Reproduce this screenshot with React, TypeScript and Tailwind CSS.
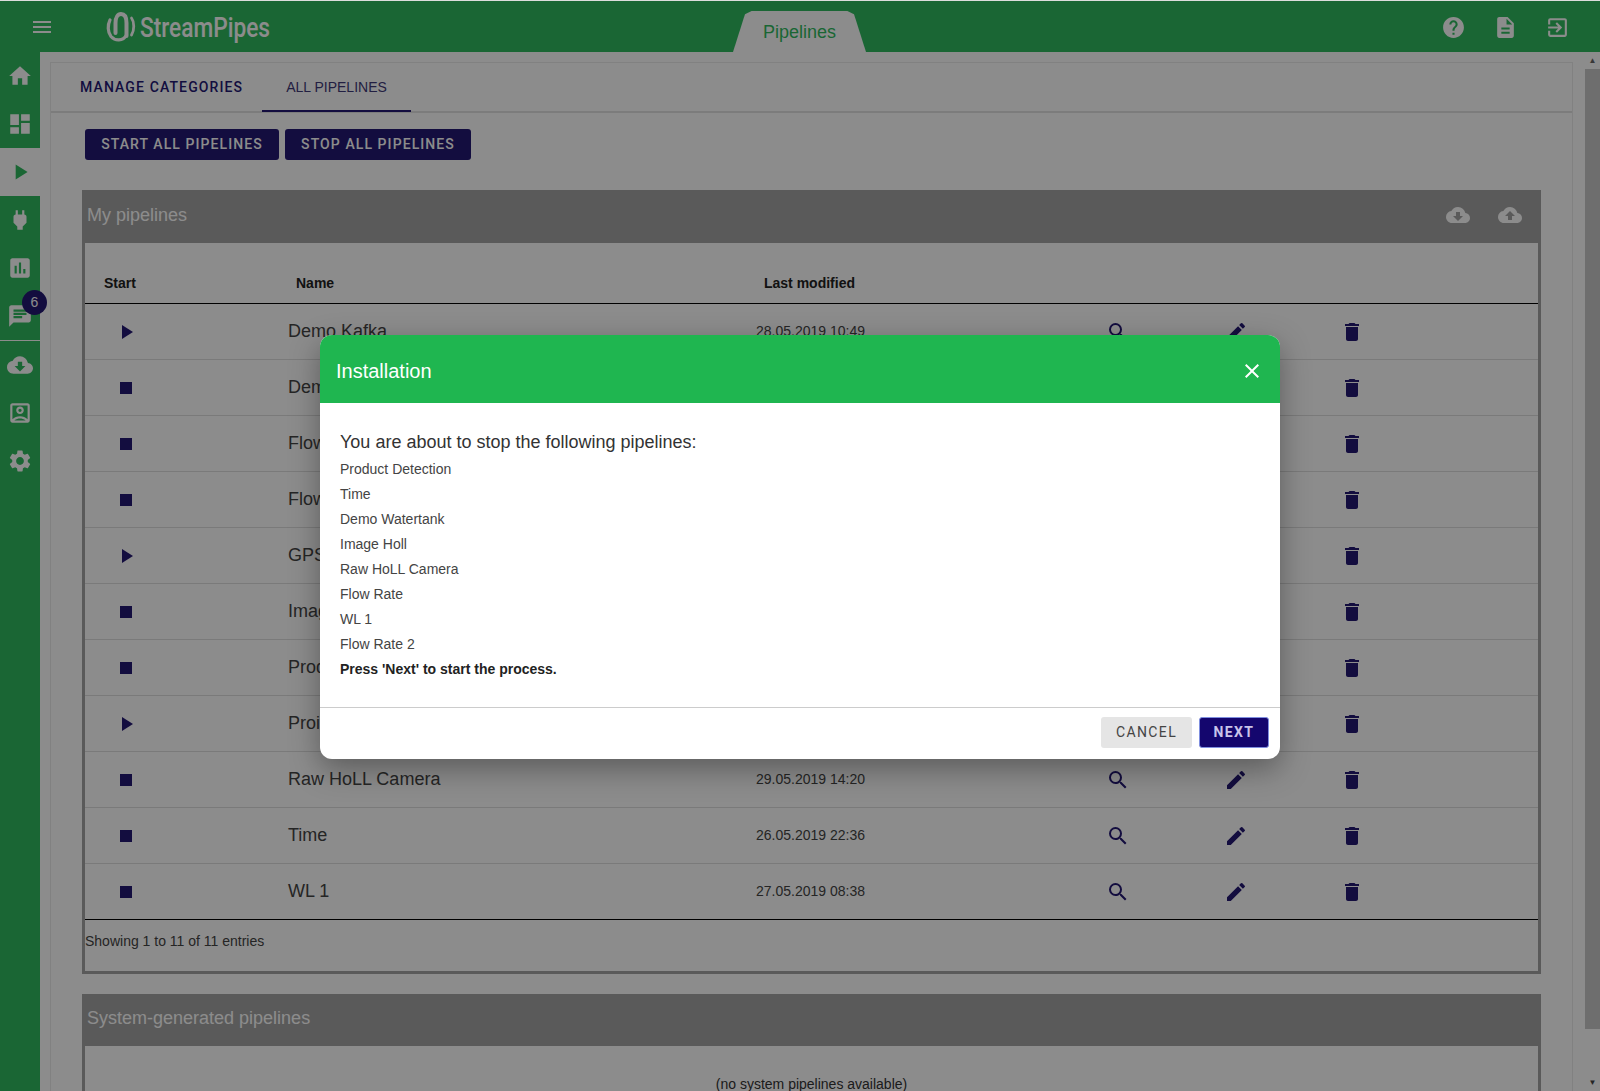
import {
  MdClose,
  MdChat,
  MdCloudDownload,
  MdCloudUpload,
  MdDashboard,
  MdDelete,
  MdDescription,
  MdEdit,
  MdExitToApp,
  MdHelp,
  MdHome,
  MdInsertChart,
  MdMenu,
  MdOutlineAccountBox,
  MdPlayArrow,
  MdPower,
  MdSearch,
  MdSettings,
  MdStop,
} from 'react-icons/md';

const rows = [
  { name: 'Demo Kafka', date: '28.05.2019 10:49', running: false },
  { name: 'Demo Watertank', date: '28.05.2019 11:02', running: true },
  { name: 'Flow Rate', date: '27.05.2019 08:34', running: true },
  { name: 'Flow Rate 2', date: '27.05.2019 08:36', running: true },
  { name: 'GPS Tracking', date: '26.05.2019 17:12', running: false },
  { name: 'Image Holl', date: '29.05.2019 14:18', running: true },
  { name: 'Product Detection', date: '29.05.2019 14:26', running: true },
  { name: 'Proite Demo', date: '26.05.2019 22:30', running: false },
  { name: 'Raw HoLL Camera', date: '29.05.2019 14:20', running: true },
  { name: 'Time', date: '26.05.2019 22:36', running: true },
  { name: 'WL 1', date: '27.05.2019 08:38', running: true },
];

const stopping = [
  'Product Detection',
  'Time',
  'Demo Watertank',
  'Image Holl',
  'Raw HoLL Camera',
  'Flow Rate',
  'WL 1',
  'Flow Rate 2',
];

const SideItem = ({ icon, active }: { icon: React.ReactNode; active?: boolean }) => (
  <div className={`flex h-12 items-center justify-center text-[26px] ${active ? 'bg-white text-[#31bb60]' : 'text-white'}`}>
    {icon}
  </div>
);

const Logo = () => (
  <svg width="30" height="30" viewBox="0 0 30 30" fill="none" stroke="white" strokeWidth="2.8" strokeLinecap="round">
    <path d="M4 8 C1.5 13 1.5 20 5 24.5 C9 29 17 29.5 20.5 23" strokeWidth="3.2" />
    <path d="M9.5 21 V11 C9.5 5 12 2 15 2 C18.5 2 20.5 5 20.5 11 V24" strokeWidth="4" />
    <path d="M25.5 6 C28.5 10 28.5 18 25.5 23" />
  </svg>
);

const App = () => {
  return (
    <div className="relative flex h-screen flex-col overflow-hidden border-t border-[#dddddd] bg-white font-['Liberation_Sans',sans-serif]">
      <header className="flex h-[51px] shrink-0 items-center bg-[#31bb60] text-white">
        <MdMenu className="ml-[30px] text-[24px]" />
        <div className="ml-[52px] flex items-center gap-[4px] pt-[1px]">
          <Logo />
          <span className="w-[130px] origin-left scale-x-[0.84] whitespace-nowrap pt-[2px] font-['Roboto',sans-serif] text-[27px] font-medium leading-none">StreamPipes</span>
        </div>
        <div className="ml-[463px] flex h-[41px] w-[133px] items-center justify-center self-end bg-white pt-[2px] text-[18px] text-[#31bb60] [clip-path:polygon(0_100%,9%_8%,14%_0,86%_0,91%_8%,100%_100%)]">
          Pipelines
        </div>
        <div className="ml-auto mr-[30px] flex gap-[27px] pt-[2px] text-[25px]">
          <MdHelp />
          <MdDescription />
          <MdExitToApp />
        </div>
      </header>

      <div className="flex min-h-0 flex-1">
        <aside className="w-10 shrink-0 bg-[#31bb60]">
          <SideItem icon={<MdHome />} />
          <SideItem icon={<MdDashboard />} />
          <SideItem active icon={<MdPlayArrow />} />
          <SideItem icon={<MdPower />} />
          <SideItem icon={<MdInsertChart />} />
          <div className="relative">
            <SideItem icon={<MdChat />} />
            <span className="absolute left-[22px] top-[-2px] flex h-[25px] w-[25px] items-center justify-center rounded-full bg-[#241874] text-[14px] text-white">
              6
            </span>
          </div>
          <div className="h-px bg-white" />
          <SideItem icon={<MdCloudDownload />} />
          <SideItem icon={<MdOutlineAccountBox />} />
          <SideItem icon={<MdSettings />} />
        </aside>

        <main className="min-w-0 flex-1 overflow-hidden pl-[10px] pr-[10px] pt-[10px]">
          <div className="min-h-[1200px] border border-[#ececec]">
            <div className="flex h-[50px] border-b-2 border-[#e2e2e2] text-[14px]">
              <div className="flex w-[211px] items-center pl-[29px] font-['Roboto',sans-serif] font-medium tracking-[0.08em] text-[#241874]">MANAGE CATEGORIES</div>
              <div className="-mb-[1px] flex w-[149px] items-center justify-center border-b-2 border-[#241874] pt-[1px] text-[#3f3a78]">ALL PIPELINES</div>
            </div>

            <div className="ml-[34px] mt-[16px] flex gap-[6px] font-['Roboto',sans-serif]">
              <button className="h-[31px] w-[194px] rounded-[3px] bg-[#241874] pb-[1px] text-[14px] font-medium tracking-[0.077em] text-white">START ALL PIPELINES</button>
              <button className="h-[31px] w-[186px] rounded-[3px] bg-[#241874] pb-[1px] text-[14px] font-medium tracking-[0.077em] text-white">STOP ALL PIPELINES</button>
            </div>

            <section className="ml-[31px] mt-[30px] w-[1459px] border-x-[3px] border-b-[3px] border-[#a5a5a5]">
              <div className="-mx-[3px] flex h-[53px] items-center bg-[#a5a5a5] pb-[3px] pl-[5px] text-[18px] text-white">
                <span>My pipelines</span>
                <div className="ml-auto mr-[19px] flex gap-[28px] text-[24px]">
                  <MdCloudDownload />
                  <MdCloudUpload />
                </div>
              </div>
              <div className="flex h-[61px] items-end border-b border-black pb-[9px] text-[14px] font-bold text-[#222222]">
                <div className="w-[211px] pl-[19px]">Start</div>
                <div className="w-[468px]">Name</div>
                <div>Last modified</div>
              </div>
              {rows.map((row, i) => (
                <div
                  key={row.name}
                  className={`flex h-[56px] items-center border-b text-[#241874] ${i === rows.length - 1 ? 'border-black' : 'border-[#dedede]'}`}
                >
                  <div className="w-[203px] pl-[29px]">
                    {row.running ? <MdStop className="text-[24px]" /> : <MdPlayArrow className="text-[24px]" />}
                  </div>
                  <div className="w-[468px] text-[18px] text-[#444444]">{row.name}</div>
                  <div className="w-[350px] text-[14px] text-[#444444]">{row.date}</div>
                  <div className="flex">
                    <MdSearch className="mr-[94px] text-[24px]" />
                    <MdEdit className="mr-[92px] text-[24px]" />
                    <MdDelete className="text-[24px]" />
                  </div>
                </div>
              ))}
              <div className="h-[51px] pt-[11px] text-[14px] text-[#444444]">Showing 1 to 11 of 11 entries</div>
            </section>

            <section className="ml-[31px] mt-[20px] w-[1459px] border-x-[3px] border-[#a5a5a5]">
              <div className="-mx-[3px] flex h-[52px] items-center bg-[#a5a5a5] pb-[4px] pl-[5px] text-[18px] text-white">System-generated pipelines</div>
              <p className="pt-[28px] text-center text-[14px] text-[#333333]">(no system pipelines available)</p>
            </section>
          </div>
        </main>

        <div className="flex w-[17px] shrink-0 flex-col items-end">
          <div className="flex h-[17px] w-[15px] items-center justify-center text-[8px] text-[#666666]">▲</div>
          <div className="h-[960px] w-[15px] bg-[#c8c8c8]" />
          <div className="mt-auto flex h-[17px] w-[15px] items-center justify-center text-[8px] text-[#444444]">▼</div>
        </div>
      </div>

      <div className="absolute inset-0 flex items-start justify-center bg-black/45 pt-[334px]">
        <div className="w-[960px] overflow-hidden rounded-[12px] bg-white shadow-[0_10px_30px_rgba(0,0,0,0.35)]">
          <div className="flex h-[68px] items-center justify-between bg-[#1fb650] pl-4 pr-[16px] pt-[3px] text-white">
            <h2 className="text-[20px]">Installation</h2>
            <MdClose className="text-[24px]" />
          </div>
          <div className="h-[304px] px-5 pt-[27px] text-[14px] leading-[25px] text-[#444444]">
            <p className="mb-[3px] text-[18px] leading-[24px] text-[#333333]">You are about to stop the following pipelines:</p>
            {stopping.map((name) => (
              <p key={name}>{name}</p>
            ))}
            <p className="font-bold text-[#222222]">Press 'Next' to start the process.</p>
          </div>
          <div className="flex h-[52px] items-start justify-end gap-[7px] border-t border-[#cccccc] pr-[11px] pt-[9px] font-['Roboto',sans-serif] text-[14px] tracking-[0.1em]">
            <button className="h-[31px] w-[91px] rounded-[3px] bg-[#e5e5e5] text-[#444444]">CANCEL</button>
            <button className="h-[31px] w-[70px] rounded-[3px] border border-[#7f8fe0] bg-[#14066e] font-bold text-[#c9c4ea]">NEXT</button>
          </div>
        </div>
      </div>
    </div>
  );
};

export default App;
